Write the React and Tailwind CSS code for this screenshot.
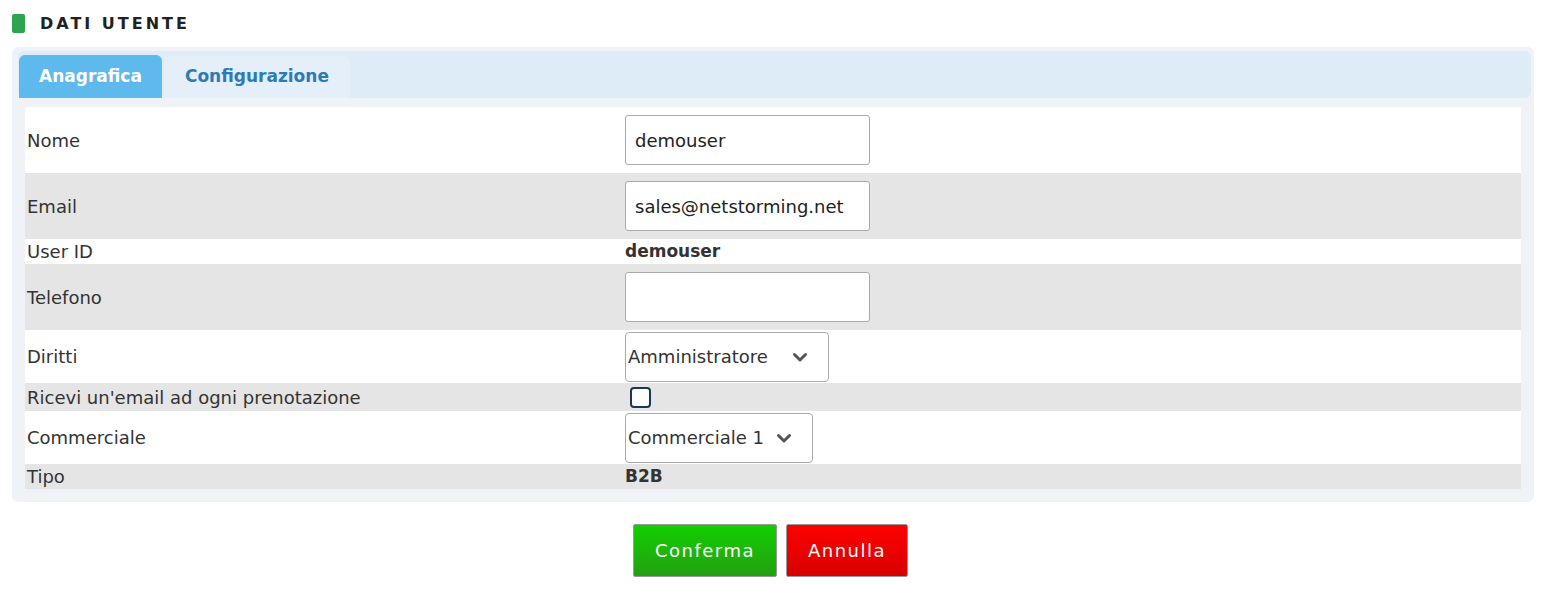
import React from "react";

const font = { fontFamily: "'DejaVu Sans', Verdana, sans-serif" };

function Chevron() {
  return (
    <svg width="16" height="16" viewBox="0 0 16 16" className="text-[#555]">
      <path d="M2.5 5.5 L8 11 L13.5 5.5" fill="none" stroke="currentColor" strokeWidth="3" strokeLinecap="round" strokeLinejoin="round" />
    </svg>
  );
}

function Row({ label, gray, h, children }) {
  return (
    <div className={`flex items-center ${h} ${gray ? "bg-[#e5e5e5]" : "bg-white"}`}>
      <div className="w-[600px] pl-[2px] text-[18px] text-[#333]">{label}</div>
      <div className="flex-1 flex items-center">{children}</div>
    </div>
  );
}

function TextInput({ value }) {
  return (
    <div className="w-[245px] h-[50px] border border-[#aaa] rounded-[3px] bg-white flex items-center px-[9px] text-[18px] text-[#222]">
      {value}
    </div>
  );
}

function Select({ value, w }) {
  return (
    <div className={`${w} h-[50px] border border-[#aaa] rounded-[4px] bg-white flex items-center justify-between pl-[2px] pr-[20px] text-[18px] text-[#333]`}>
      <span>{value}</span>
      <Chevron />
    </div>
  );
}

export default function App() {
  return (
    <div className="bg-white min-h-screen pt-[14px] pl-[12px] pr-[9px]" style={font}>
      {/* header */}
      <div className="flex items-center gap-[15px] h-[19px]">
        <div className="w-[13px] h-[19px] rounded-[2px] bg-[#2ea44f]" />
        <div className="text-[16px] font-semibold tracking-[3px] text-[#222]">DATI UTENTE</div>
      </div>

      {/* panel */}
      <div className="mt-[14px] bg-[#eff3f7] rounded-[6px] pt-[4px] pl-[6px] pr-[3px] pb-[13px]">
        <div className="bg-[#deecf7] rounded-[6px] h-[47px] flex items-end pl-[1px]">
          <div className="h-[43px] px-[20px] flex items-center bg-[#5eb9ec] rounded-t-[6px] text-white font-bold text-[17px]">
            Anagrafica
          </div>
          <div className="ml-[2px] h-[42px] self-start mt-[5px] px-[21px] flex items-center bg-[#e4eff9] rounded-t-[6px] text-[#2c7bb6] font-bold text-[17px]">
            Configurazione
          </div>
        </div>

        <div className="mt-[9px] ml-[7px] mr-[10px]">
          <Row label="Nome" h="h-[66px]">
            <TextInput value="demouser" />
          </Row>
          <Row label="Email" gray h="h-[66px]">
            <TextInput value="sales@netstorming.net" />
          </Row>
          <Row label="User ID" h="h-[25px]">
            <span className="text-[17px] font-bold text-[#333]">demouser</span>
          </Row>
          <Row label="Telefono" gray h="h-[66px]">
            <TextInput value="" />
          </Row>
          <Row label="Diritti" h="h-[53px]">
            <Select value="Amministratore" w="w-[204px]" />
          </Row>
          <Row label="Ricevi un'email ad ogni prenotazione" gray h="h-[28px]">
            <div className="ml-[5px] w-[21px] h-[21px] border-2 border-[#17375e] rounded-[4px] bg-white" />
          </Row>
          <Row label="Commerciale" h="h-[53px]">
            <Select value="Commerciale 1" w="w-[188px]" />
          </Row>
          <Row label="Tipo" gray h="h-[25px]">
            <span className="text-[17px] font-bold text-[#333]">B2B</span>
          </Row>
        </div>
      </div>

      {/* actions */}
      <div className="mt-[22px] flex justify-center gap-[9px] pr-[5px]">
        <button className="w-[144px] h-[53px] border border-[#999] rounded-[2px] bg-gradient-to-b from-[#10cf00] to-[#22a010] text-white text-[18px] tracking-[1.5px]">
          Conferma
        </button>
        <button className="w-[122px] h-[53px] border border-[#999] rounded-[2px] bg-gradient-to-b from-[#ff0000] to-[#d70000] text-white text-[18px] tracking-[1.5px]">
          Annulla
        </button>
      </div>
    </div>
  );
}
